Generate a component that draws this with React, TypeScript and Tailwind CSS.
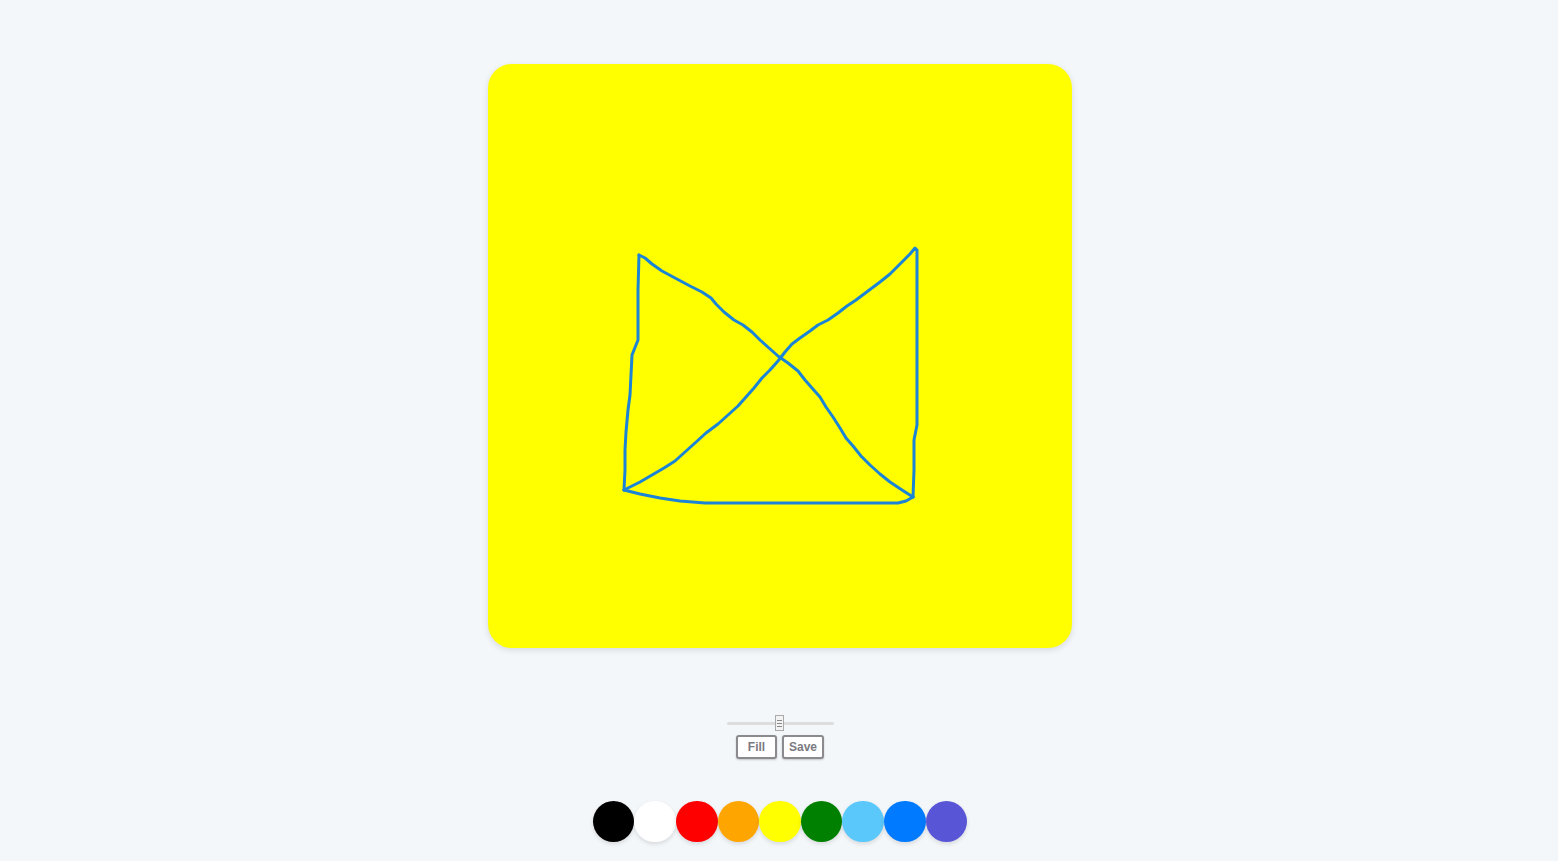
import React from 'react';

const colors = ['#000000', '#ffffff', '#ff0000', '#ffa500', '#ffff00', '#008000', '#5ac8fa', '#007aff', '#5856d6'];

// stroke the user drew, in page coordinates
const strokes = [
  '639,255 645,258 652,264 662,271 675,278 690,286 702,292 711,298 716,304 724,312 734,320 743,325 752,332 760,340 769,348 778,356 788,363 798,371 805,380 812,388 820,397 826,407 833,417 840,428 846,438 853,446 861,456 870,465 880,474 890,482 902,490 913,497',
  '913,497 914,470 914,440 917,425 917,380 917,320 917,260 917,250 915,248 910,254 904,260 897,267 890,274 880,282 872,288 864,294 856,300 847,306 838,313 828,320 818,325 810,331 800,338 792,344 785,352 778,361 770,370 762,378 754,388 746,397 738,406 728,415 718,424 706,433 695,443 685,452 675,461 664,468 652,475 640,482 632,486 624,490',
  '624,490 625,470 625,450 626,432 628,410 630,395 631,375 632,355 636,345 638,340 638,320 638,290 639,255',
  '624,490 640,494 660,498 680,501 705,503 760,503 820,503 870,503 898,503 906,501 913,497',
];

export default function App() {
  return (
    <div className="min-h-[861px] w-full bg-[#f4f7fa] flex flex-col items-center pt-16 pl-[2px] font-['Liberation_Sans',Arial,sans-serif]">
      <div className="w-[584px] h-[584px] rounded-3xl bg-[#ffff00] shadow-[0_2px_6px_rgba(0,0,0,0.12)] overflow-hidden">
        <svg width="584" height="584" viewBox="488 64 584 584">
          {strokes.map((p, i) => (
            <polyline key={i} points={p} fill="none" stroke="#1b84d6" strokeWidth="3" strokeLinejoin="round" strokeLinecap="round" />
          ))}
        </svg>
      </div>

      <div className="mt-[67px] flex flex-col items-center">
        <div className="relative w-[107px] h-[16px] flex items-center">
          <div className="w-full h-[3px] bg-[#dddddd] rounded-full" />
          <div className="absolute left-[48px] top-0 w-[9px] h-[16px] bg-[#f3f3f3] border border-[#aaaaaa] flex flex-col items-center justify-center gap-[2px]">
            <div className="w-[5px] h-px bg-[#888]" />
            <div className="w-[5px] h-px bg-[#888]" />
            <div className="w-[5px] h-px bg-[#888]" />
          </div>
        </div>
        <div className="mt-[4px] flex gap-[5px]">
          <button className="w-[41px] h-[24px] border-2 border-[#8a8a8f] rounded-[3px] bg-white text-[12px] font-bold text-[#7a7a80] shadow-[0_1px_2px_rgba(0,0,0,0.2)]">Fill</button>
          <button className="w-[42px] h-[24px] border-2 border-[#8a8a8f] rounded-[3px] bg-white text-[12px] font-bold text-[#7a7a80] shadow-[0_1px_2px_rgba(0,0,0,0.2)]">Save</button>
        </div>
      </div>

      <div className="mt-[42px] flex">
        {colors.map((c) => (
          <button key={c} className="w-[41.6px] h-[41px] rounded-full shadow-[0_2px_4px_rgba(0,0,0,0.12)]" style={{ backgroundColor: c }} />
        ))}
      </div>
    </div>
  );
}
